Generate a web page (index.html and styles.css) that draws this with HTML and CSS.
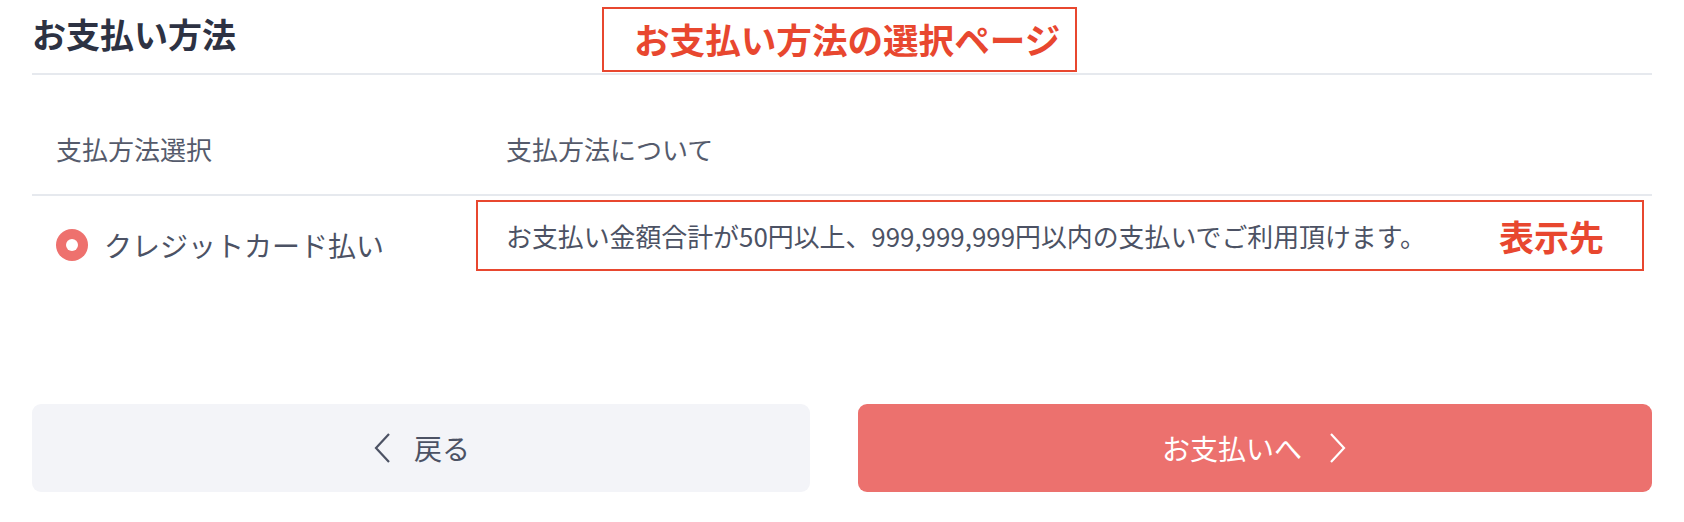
FILE: index.html
```html
<!DOCTYPE html>
<html lang="ja">
<head>
    <meta charset="UTF-8">
    <meta name="viewport" content="width=device-width, initial-scale=1.0">
    <title>お支払い方法</title>
    <link rel="stylesheet" href="styles.css">
</head>
<body>
    <div class="page">
        <!-- 見出し -->
        <div class="head">
            <h1>お支払い方法</h1>
        </div>
        <div class="note note-title">お支払い方法の選択ページ</div>

        <!-- 支払方法の一覧 -->
        <div class="methods">
            <div class="row row-head">
                <div class="cell-select">支払方法選択</div>
                <div class="cell-about">支払方法について</div>
            </div>
            <div class="row row-item">
                <label class="cell-select method">
                    <span class="radio"></span>
                    クレジットカード払い
                </label>
                <div class="cell-about desc">
                    <span>お支払い金額合計が50円以上、999,999,999円以内の支払いでご利用頂けます。</span>
                    <span class="note-label">表示先</span>
                </div>
            </div>
        </div>

        <!-- ボタン -->
        <div class="buttons">
            <button class="btn btn-back">
                <svg width="20" height="32" viewBox="0 0 20 32"><path d="M17 2 L4 16 L17 30" fill="none" stroke="currentColor" stroke-width="2.2"/></svg>
                <span>戻る</span>
            </button>
            <button class="btn btn-pay">
                <span>お支払いへ</span>
                <svg width="20" height="32" viewBox="0 0 20 32"><path d="M3 2 L16 16 L3 30" fill="none" stroke="currentColor" stroke-width="2.2"/></svg>
            </button>
        </div>
    </div>
</body>
</html>
```

FILE: styles.css
```css
body {
    margin: 0;
    padding: 0;
    background-color: #ffffff;
    font-family: "Noto Sans CJK JP", "Noto Sans", sans-serif;
    color: #4c5264;
}

.page {
    position: relative;
    padding: 0 32px;
}

.head {
    height: 73px;
    display: flex;
    align-items: center;
    border-bottom: 2px solid #e6e9ee;
}

h1 {
    margin: 0 0 6px 0;
    font-size: 34px;
    font-weight: 700;
    color: #2d3243;
}

/* 赤枠の注釈 */
.note {
    color: #e8472f;
    font-weight: 700;
}

.note-title {
    position: absolute;
    left: 602px;
    top: 7px;
    width: 441px;
    height: 61px;
    border: 2px solid #e8472f;
    font-size: 35.6px;
    line-height: 59px;
    padding-left: 30px;
    box-sizing: content-box;
}

.methods {
    margin-top: 55px;
}

.row {
    display: grid;
    grid-template-columns: 444px 1fr;
}

.row-head {
    height: 64px;
    align-items: start;
    border-bottom: 2px solid #e6e9ee;
    font-size: 26px;
    color: #555b6c;
}

.row-head .cell-select {
    padding-left: 24px;
}

.row-head .cell-about {
    padding-left: 30px;
}

.row-item {
    padding-top: 4px;
    align-items: start;
}

.method {
    display: flex;
    align-items: center;
    gap: 16px;
    padding-left: 24px;
    padding-top: 25px;
    font-size: 28px;
    color: #4c5264;
}

.radio {
    width: 32px;
    height: 32px;
    border-radius: 50%;
    background-color: #ee716e;
    display: flex;
    align-items: center;
    justify-content: center;
}

.radio::after {
    content: "";
    width: 12px;
    height: 12px;
    border-radius: 50%;
    background-color: #ffffff;
}

.desc {
    height: 67px;
    margin-right: 8px;
    border: 2px solid #e8472f;
    display: flex;
    align-items: center;
    justify-content: space-between;
    padding: 0 38px 0 28px;
    font-size: 25.9px;
    color: #4c5264;
}

.note-label {
    color: #e8472f;
    font-weight: 700;
    font-size: 35px;
}

.buttons {
    margin-top: 133px;
    display: flex;
    gap: 48px;
}

.btn {
    height: 88px;
    border: none;
    border-radius: 9px;
    font-family: inherit;
    font-size: 28px;
    display: flex;
    align-items: center;
    justify-content: center;
    gap: 22px;
    cursor: pointer;
}

.btn-back {
    width: 778px;
    background-color: #f3f4f8;
    color: #4c5264;
}

.btn-pay {
    flex: 1;
    background-color: #ec716e;
    color: #ffffff;
    gap: 26px;
}
```
